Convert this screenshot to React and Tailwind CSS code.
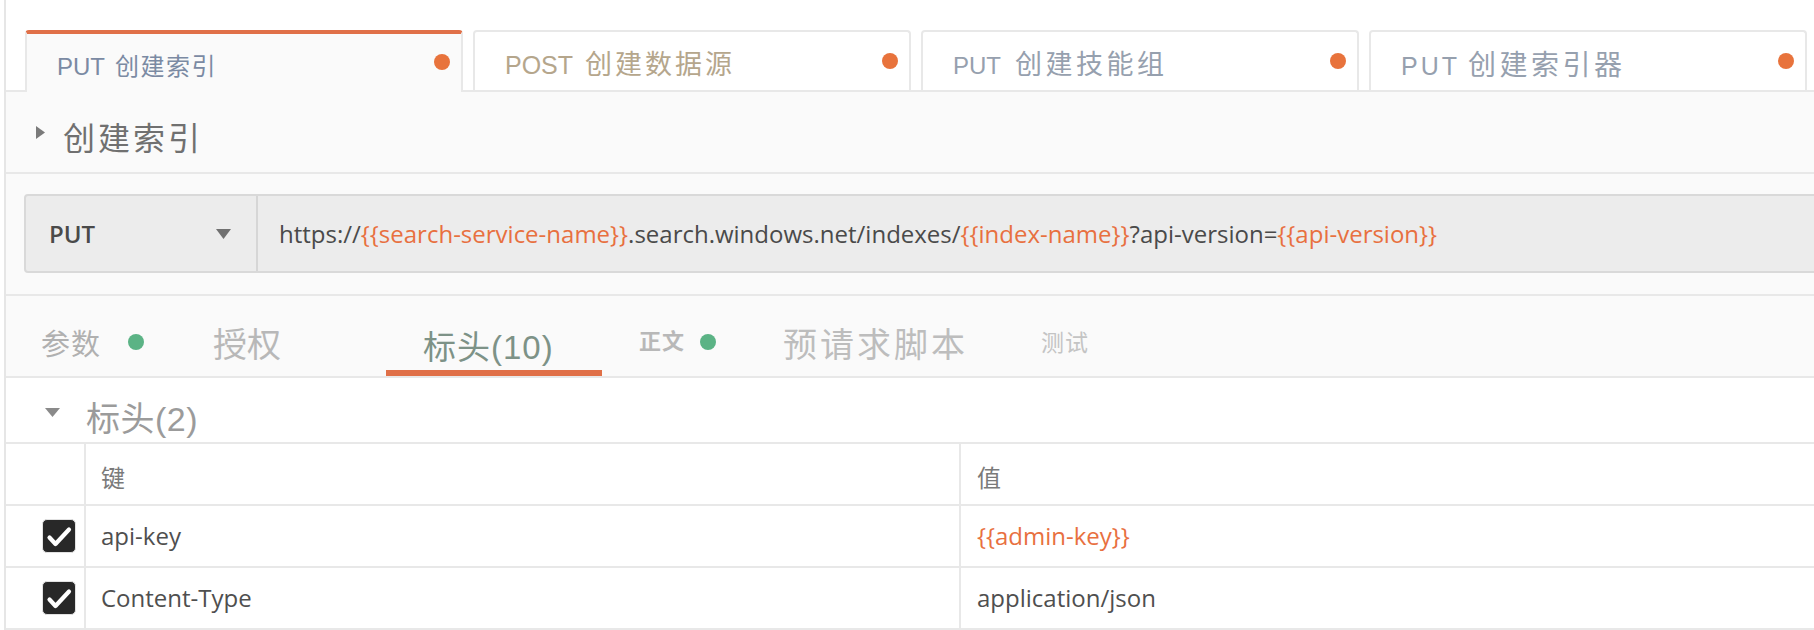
import React from "react";

const sysFont = "font-['Liberation_Sans','Noto_Sans_CJK_SC',sans-serif]";
const openFont = "font-['Open_Sans','Noto_Sans_CJK_SC',sans-serif]";

function Dot({ className = "" }) {
  return <span className={"block w-4 h-4 rounded-full shrink-0 " + className} />;
}

function Tab({ method, name, color, active, nameCls, methodCls }) {
  const base =
    "w-[438px] shrink-0 rounded-t-[4px] flex items-center justify-between pl-[30px] pr-[11px] " +
    sysFont;
  const label = (
    <span className={"flex items-baseline leading-none whitespace-nowrap " + color}>
      <span className={methodCls}>{method}</span>
      <span className={nameCls}>{name}</span>
    </span>
  );
  if (active) {
    return (
      <div
        className={
          base +
          " -mb-[2px] h-[62px] bg-[#fafafa] border-x-2 border-t-4 border-[#e8e8e8] border-t-[#e07048]"
        }
      >
        <span className="pt-[7px]">{label}</span>
        <Dot className="bg-[#e8733c] -mt-[2px]" />
      </div>
    );
  }
  return (
    <div className={base + " h-[60px] bg-white border-x-2 border-t-2 border-[#e8e8e8]"}>
      <span className="pt-[9px]">{label}</span>
      <Dot className="bg-[#e8733c]" />
    </div>
  );
}

function Check() {
  return (
    <div className="w-[34px] h-[34px] rounded-[5px] border border-[#e2e2e2] bg-[#282828] flex items-center justify-center">
      <svg width="32" height="32" viewBox="0 0 32 32">
        <path
          d="M6.5 17.5 L12.5 24 L26 9.5"
          fill="none"
          stroke="#ffffff"
          strokeWidth="4.2"
          strokeLinecap="round"
          strokeLinejoin="round"
        />
      </svg>
    </div>
  );
}

export default function App() {
  return (
    <div className="w-[1814px] h-[630px] bg-white flex overflow-hidden">
      <div className="w-[4px] shrink-0 bg-white" />
      <div className="w-[2px] shrink-0 bg-[#e6e6e6]" />
      <div className="flex-1 min-w-0 flex flex-col overflow-hidden">
        {/* tab bar */}
        <div className="h-[92px] shrink-0 flex items-end gap-[10px] pl-[19px] border-b-2 border-[#e8e8e8]">
          <Tab
            method="PUT"
            name="创建索引"
            color="text-[#7b8aa3]"
            methodCls="text-[24px] mr-[10px]"
            nameCls="text-[24px] tracking-[1.5px]"
            active
          />
          <Tab
            method="POST"
            name="创建数据源"
            color="text-[#b5a68c]"
            methodCls="text-[25px] mr-[12px]"
            nameCls="text-[27px] tracking-[3px]"
          />
          <Tab
            method="PUT"
            name="创建技能组"
            color="text-[#96a0ae]"
            methodCls="text-[24px] mr-[14px]"
            nameCls="text-[27px] tracking-[3.5px]"
          />
          <Tab
            method="PUT"
            name="创建索引器"
            color="text-[#96a0ae]"
            methodCls="text-[25px] tracking-[3px] mr-[8px]"
            nameCls="text-[28px] tracking-[3.5px]"
          />
        </div>

        {/* title */}
        <div className="h-[82px] shrink-0 bg-[#fafafa] border-b-2 border-[#e8e8e8] flex items-start pl-[30px]">
          <svg width="9" height="13" viewBox="0 0 9 13" className="mt-[34px] shrink-0">
            <path d="M0 0 L9 6.5 L0 13 Z" fill="#7a7a7a" />
          </svg>
          <span
            className={
              "ml-[18px] mt-[31px] text-[32px] leading-none tracking-[3px] text-[#707070] " + sysFont
            }
          >
            创建索引
          </span>
        </div>

        {/* url bar */}
        <div className="h-[122px] shrink-0 bg-[#fafafa] border-b-2 border-[#e8e8e8] pt-[20px] pl-[18px]">
          <div className="h-[79px] flex border-2 border-[#d9d9d9] rounded-[4px] bg-[#ececec] mr-[-20px]">
            <div className="w-[232px] shrink-0 border-r-2 border-[#d6d6d6] flex items-center justify-between pl-[23px] pr-[25px]">
              <span className={"text-[24px] font-semibold text-[#4a4a4a] " + openFont}>PUT</span>
              <svg width="15" height="10" viewBox="0 0 15 10">
                <path d="M0 0 L15 0 L7.5 10 Z" fill="#707070" />
              </svg>
            </div>
            <div
              className={
                "flex items-center pl-[21px] text-[24px] text-[#4a4a4a] whitespace-nowrap " + openFont
              }
            >
              https://<span className="text-[#e8703f]">{"{{search-service-name}}"}</span>
              .search.windows.net/indexes/
              <span className="text-[#e8703f]">{"{{index-name}}"}</span>?api-version=
              <span className="text-[#e8703f]">{"{{api-version}}"}</span>
            </div>
          </div>
        </div>

        {/* request tabs */}
        <div
          className={
            "h-[82px] shrink-0 bg-[#fafafa] border-b-2 border-[#e8e8e8] flex items-stretch pt-[18px] " +
            sysFont
          }
        >
          <div className="ml-[35px] w-[87px] flex items-center text-[29px] leading-none tracking-[1px] text-[#b0b0b0]">
            参数
          </div>
          <Dot className="self-center mb-[6px] bg-[#5bb385]" />
          <div className="ml-[69px] w-[173px] flex items-center text-[34px] leading-none text-[#b8b8b8]">
            授权
          </div>
          <div className="w-[216px] border-b-[6px] border-[#e07048] pl-[37px] pt-[10px] flex items-center text-[33px] leading-none tracking-[1px] text-[#7d9287]">
            标头(10)
          </div>
          <div className="ml-[37px] w-[61px] flex items-center mb-[6px] text-[22px] leading-none font-bold tracking-[1px] text-[#b8b8b8]">
            正文
          </div>
          <Dot className="self-center mb-[6px] bg-[#5bb385]" />
          <div className="ml-[67px] w-[258px] flex items-center text-[34px] leading-none tracking-[3px] text-[#bdbdbd]">
            预请求脚本
          </div>
          <div className="flex items-center mb-[4px] text-[23px] leading-none tracking-[1px] text-[#c4c4c4]">
            测试
          </div>
        </div>

        {/* headers section */}
        <div className="flex-1 bg-white flex flex-col">
          <div className="h-[66px] shrink-0 border-b-2 border-[#e8e8e8] flex items-start pl-[39px]">
            <svg width="15" height="9" viewBox="0 0 15 9" className="mt-[30px] shrink-0">
              <path d="M0 0 L15 0 L7.5 9 Z" fill="#8a8a8a" />
            </svg>
            <span
              className={
                "ml-[26px] mt-[24px] text-[34px] leading-none tracking-[0.5px] text-[#9b9b9b] " + sysFont
              }
            >
              标头(2)
            </span>
          </div>

          <div className="h-[62px] shrink-0 border-b-2 border-[#e8e8e8] flex">
            <div className="w-[80px] shrink-0 border-r-2 border-[#e8e8e8]" />
            <div
              className={
                "w-[875px] shrink-0 border-r-2 border-[#e8e8e8] flex items-center pl-[15px] pt-[10px] text-[24px] leading-none text-[#7a7a7a] " +
                sysFont
              }
            >
              键
            </div>
            <div
              className={
                "flex-1 flex items-center pl-[16px] pt-[10px] text-[24px] leading-none text-[#7a7a7a] " +
                sysFont
              }
            >
              值
            </div>
          </div>

          {[
            { k: "api-key", v: "{{admin-key}}", vc: "text-[#e8703f]" },
            { k: "Content-Type", v: "application/json", vc: "text-[#4f4f4f]" },
          ].map((r) => (
            <div key={r.k} className="h-[62px] shrink-0 border-b-2 border-[#e8e8e8] flex">
              <div className="w-[80px] shrink-0 border-r-2 border-[#e8e8e8] flex items-center pl-[36px]">
                <Check />
              </div>
              <div
                className={
                  "w-[875px] shrink-0 border-r-2 border-[#e8e8e8] flex items-center pl-[15px] text-[24px] text-[#4f4f4f] " +
                  openFont
                }
              >
                {r.k}
              </div>
              <div className={"flex-1 flex items-center pl-[16px] text-[24px] " + r.vc + " " + openFont}>
                {r.v}
              </div>
            </div>
          ))}
        </div>
      </div>
    </div>
  );
}
